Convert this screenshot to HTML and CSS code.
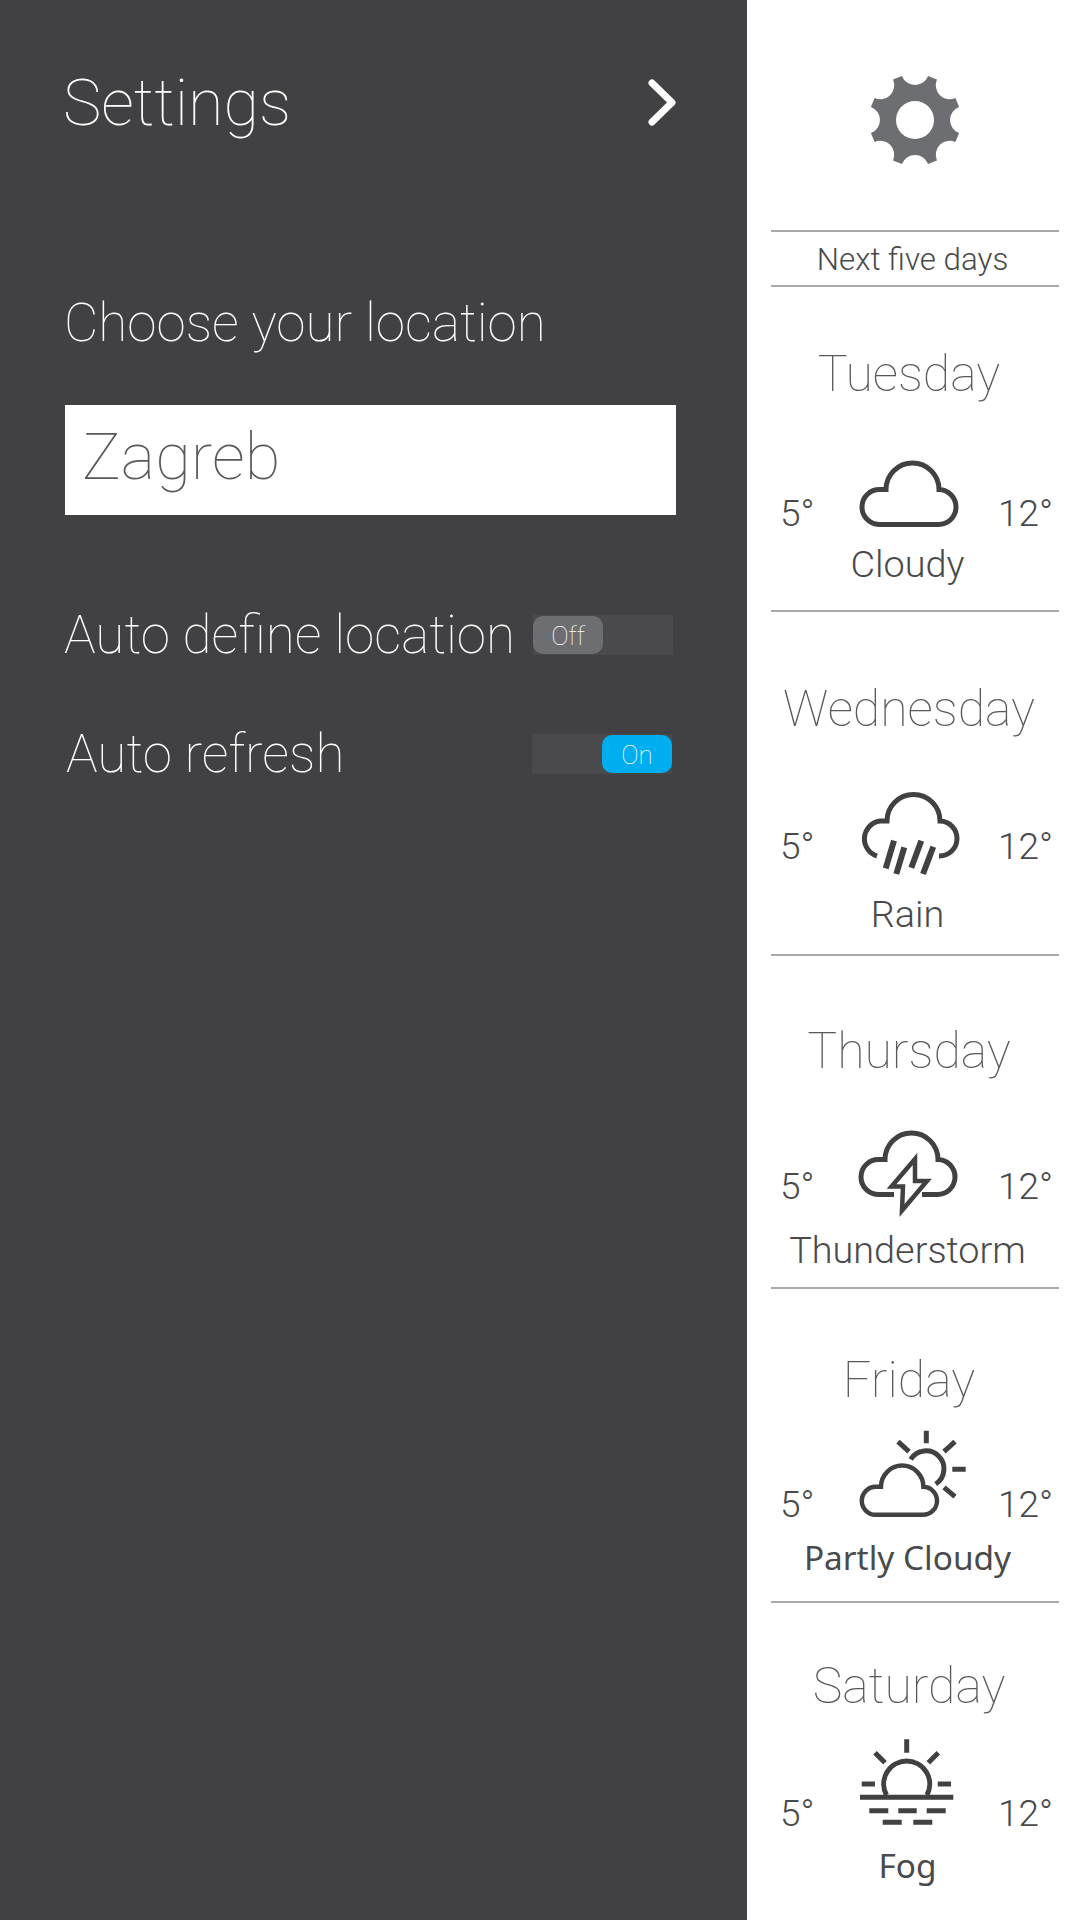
FILE: index.html
```html
<!DOCTYPE html>
<html lang="en">
<head>
<meta charset="utf-8">
<title>Settings</title>
<link rel="stylesheet" href="styles.css">
</head>
<body>
<main class="app">
  <section class="settings">
    <header class="settings-head">
      <h1 class="settings-title">Settings</h1>
      <svg class="chevron" viewBox="0 0 28 47" width="28" height="47"><path d="M4 4 L24 23.5 L4 43"/></svg>
    </header>
    <h2 class="field-label">Choose your location</h2>
    <div class="location-input">Zagreb</div>
    <div class="option option-define">
      <span class="option-label">Auto define location</span>
      <div class="toggle"><span class="knob knob-off">Off</span></div>
    </div>
    <div class="option option-refresh">
      <span class="option-label">Auto refresh</span>
      <div class="toggle toggle-on"><span class="knob knob-on">On</span></div>
    </div>
  </section>

  <aside class="forecast">
    <div class="gear-wrap">
      <svg class="gear" viewBox="-46 -46 92 92" width="92" height="92"><path fill-rule="evenodd" d="M-13.1 -44.1 A14 14 0 0 0 13.1 -44.1 L21.95 -40.4 A14 14 0 0 0 40.4 -21.95 L44.1 -13.1 A14 14 0 0 0 44.1 13.1 L40.4 21.95 A14 14 0 0 0 21.95 40.4 L13.1 44.1 A14 14 0 0 0 -13.1 44.1 L-21.95 40.4 A14 14 0 0 0 -40.4 21.95 L-44.1 13.1 A14 14 0 0 0 -44.1 -13.1 L-40.4 -21.95 A14 14 0 0 0 -21.95 -40.4 Z M19 0 A19 19 0 1 0 -19 0 A19 19 0 1 0 19 0 Z"/></svg>
    </div>
    <div class="next-days">Next five days</div>

    <article class="day day-tue">
      <h3 class="day-name">Tuesday</h3>
      <div class="day-row">
        <span class="temp">5°</span>
        <svg class="wx" viewBox="-10 -1 120 90" width="120" height="90"><path d="M20 63.5 H79 A17.5 17.5 0 0 0 80 28.5 A26.5 26.5 0 0 0 27 28.5 H21 A17.5 17.5 0 0 0 20 63.5 Z"/></svg>
        <span class="temp temp-high">12°</span>
      </div>
      <div class="day-cond">Cloudy</div>
    </article>

    <article class="day day-wed">
      <h3 class="day-name">Wednesday</h3>
      <div class="day-row">
        <span class="temp">5°</span>
        <svg class="wx" viewBox="-10 0 120 90" width="120" height="90"><path d="M18 66 A18 18 0 0 1 21 31 H28 A26.5 26.5 0 0 1 81 31 A17.5 17.5 0 0 1 80 66"/><path class="wx-rain" d="M35 50.7 L26.7 78.3 M45.3 57.3 L37.3 84 M62.3 50.7 L52.3 77.7 M74.3 56.7 L64 84"/></svg>
        <span class="temp temp-high">12°</span>
      </div>
      <div class="day-cond">Rain</div>
    </article>

    <article class="day day-thu">
      <h3 class="day-name">Thursday</h3>
      <div class="day-row">
        <span class="temp">5°</span>
        <svg class="wx" viewBox="-9 0 120 90" width="120" height="90"><path d="M36 63.5 H20 A17.5 17.5 0 0 1 21 28.5 H27 A26.5 26.5 0 0 1 80 28.5 A17.5 17.5 0 0 1 79 63.5 H64"/><path class="wx-thin" d="M57 28 L33.5 55.5 H45 L44 79.5 L69 50 H57 Z"/></svg>
        <span class="temp temp-high">12°</span>
      </div>
      <div class="day-cond">Thunderstorm</div>
    </article>

    <article class="day day-fri">
      <h3 class="day-name">Friday</h3>
      <div class="day-row">
        <span class="temp">5°</span>
        <svg class="wx" viewBox="-5 0 120 95" width="120" height="95"><path class="wx-mid" transform="translate(5.4 39) scale(.8)" d="M20 63.5 H79 A17.5 17.5 0 0 0 80 28.5 A26.5 26.5 0 0 0 27 28.5 H21 A17.5 17.5 0 0 0 20 63.5 Z"/><path d="M56.7 34.3 A18 18 0 1 1 81.7 59 M72.3 5.7 V18.3 M44 16.7 L55 26.7 M101 16.7 L90 26.7 M98.3 44.3 H111.7 M90 62.3 L101 71.7"/></svg>
        <span class="temp temp-high">12°</span>
      </div>
      <div class="day-cond day-cond-alt">Partly Cloudy</div>
    </article>

    <article class="day day-sat">
      <h3 class="day-name">Saturday</h3>
      <div class="day-row">
        <span class="temp">5°</span>
        <svg class="wx" viewBox="-6 0 120 95" width="120" height="95"><path d="M31.5 60 A23 23 0 1 1 71.9 60 M51.7 4.3 V17.7 M20 17.7 L30 27.7 M83.3 17.7 L73.3 27.7 M6.7 49 H20 M82.7 49 H96 M5 62.3 H98.3 M14.3 75.7 H33.3 M43.3 75.7 H61.7 M71.7 75.7 H90.7 M27.7 87.3 H46.7 M58.3 87.3 H77.3"/></svg>
        <span class="temp temp-high">12°</span>
      </div>
      <div class="day-cond day-cond-alt">Fog</div>
    </article>
  </aside>
</main>
</body>
</html>
```
FILE: styles.css
```css
* { box-sizing: border-box; }
html, body { margin: 0; padding: 0; }
body { font-family: Roboto, "Liberation Sans", sans-serif; font-weight: 300; background: #fff; }
h1, h2, h3 { margin: 0; font-weight: inherit; }

.app { display: flex; width: 1080px; height: 1920px; overflow: hidden; }

/* Left settings panel */
.settings { width: 747px; height: 100%; background: #414042; color: #fff; padding: 0 71px 0 65px; font-weight: 100; }
.settings-head { display: flex; justify-content: space-between; align-items: flex-start; height: 291px; padding-top: 66px; }
.settings-title { font-size: 64.7px; line-height: 75px; margin-left: -2px; }
.chevron { margin-top: 13px; fill: none; stroke: #fff; stroke-width: 7; stroke-linecap: round; stroke-linejoin: round; }
.field-label { font-size: 53px; line-height: 64px; height: 114px; margin-left: -1px; }
.location-input { height: 110px; background: #fff; color: #58595b; font-size: 65px; line-height: 104px; padding-left: 17px; }
.option { display: flex; justify-content: space-between; align-items: center; height: 40px; }
.option-define { margin-top: 100px; padding-right: 3px; }
.option-refresh { margin-top: 79px; padding: 0 4px 0 2px; }
.option-label { font-size: 53px; line-height: 64px; margin-left: -1px; }
.toggle { display: flex; width: 140px; height: 40px; background: #4a4a4c; padding: 1px 0; }
.toggle-on { justify-content: flex-end; }
.knob { width: 70px; height: 38px; border-radius: 10px; text-align: center; font-size: 26px; line-height: 40px; color: #fff; font-weight: 100; }
.knob-off { background: #6d6e71; }
.knob-on { background: #00aeef; }

/* Right forecast panel */
.forecast { width: 333px; height: 100%; background: #fff; color: #4a4a4c; padding-left: 24px; padding-right: 21px; }
.gear-wrap { display: flex; justify-content: center; height: 230px; padding: 74px 0 0 0; }
.gear { fill: #6d6e71; }
.next-days { height: 57px; border-top: 2px solid #a7a9ac; border-bottom: 2px solid #a7a9ac; font-size: 31.3px; line-height: 56px; text-align: center; padding-right: 5px; }

.day { border-bottom: 2px solid #a7a9ac; }
.day-name { font-size: 50px; line-height: 62px; text-align: center; margin-right: 12px; color: #58595b; font-weight: 100; }
.day-row { display: grid; grid-template-columns: 66px 120px 1fr; padding-left: 9px; align-items: start; }
.temp { font-size: 37px; line-height: 40px; }
.temp-high { text-align: right; padding-right: 6px; }
.wx { display: block; margin-left: 3px; overflow: visible; fill: none; stroke: #414042; stroke-width: 5; }
.wx-thin { stroke-width: 4.5; }
.wx-mid { stroke-width: 5.6; }
.wx-rain { stroke-width: 6; }
.day-cond { font-size: 37.8px; line-height: 42px; text-align: center; margin-right: 15px; }
.day-cond-alt { font-family: "Noto Sans", sans-serif; font-weight: 400; font-size: 33.4px; line-height: 40px; }

.day-tue { padding: 56px 0 25px; }
.day-tue .day-row { margin-top: 55px; height: 83px; }
.day-tue .temp { margin-top: 34px; }
.day-wed { padding: 66px 0 19px; }
.day-wed .day-row { margin-top: 50px; height: 103px; }
.day-wed .temp { margin-top: 37px; }
.day-thu { padding: 64px 0 16px; }
.day-thu .day-row { margin-top: 49px; height: 98px; }
.day-thu .temp { margin-top: 36px; }
.day-fri { padding: 60px 0 24px; }
.day-fri .day-row { margin-top: 14px; height: 112px; }
.day-fri .temp { margin-top: 60px; }
.day-sat { padding: 52px 0 0; border-bottom: 0; }
.day-sat .day-row { margin-top: 18px; height: 110px; }
.day-sat .temp { margin-top: 59px; }
```
